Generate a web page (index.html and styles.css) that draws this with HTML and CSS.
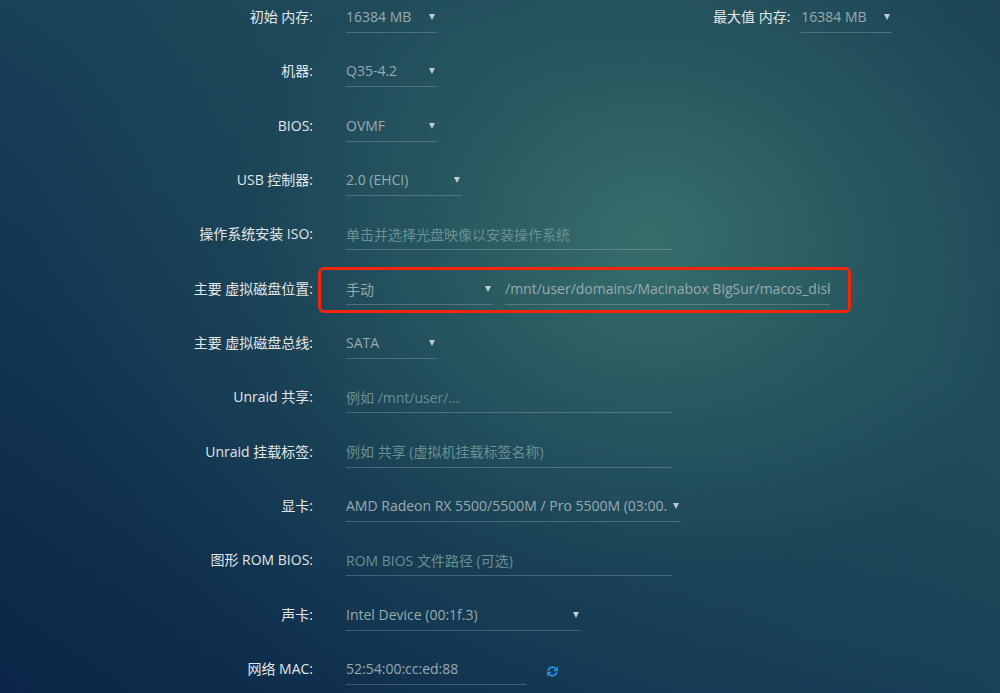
FILE: index.html
```html
<!DOCTYPE html>
<html lang="zh-CN">
<head>
<meta charset="utf-8">
<title>虚拟机设置</title>
<link rel="stylesheet" href="styles.css">
</head>
<body>
<form class="vm-form">
  <div class="row">
    <label class="label">初始 内存:</label>
    <div class="fields">
      <div class="select w-91"><span class="val">16384 MB</span></div>
      <div class="pair">
        <label class="label">最大值 内存:</label>
        <div class="select w-91"><span class="val">16384 MB</span></div>
      </div>
    </div>
  </div>
  <div class="row">
    <label class="label">机器:</label>
    <div class="fields"><div class="select w-91"><span class="val">Q35-4.2</span></div></div>
  </div>
  <div class="row">
    <label class="label">BIOS:</label>
    <div class="fields"><div class="select w-91"><span class="val">OVMF</span></div></div>
  </div>
  <div class="row">
    <label class="label">USB 控制器:</label>
    <div class="fields"><div class="select w-116"><span class="val">2.0 (EHCI)</span></div></div>
  </div>
  <div class="row">
    <label class="label">操作系统安装 ISO:</label>
    <div class="fields"><input class="text w-326" type="text" placeholder="单击并选择光盘映像以安装操作系统"></div>
  </div>
  <div class="row">
    <label class="label">主要 虚拟磁盘位置:</label>
    <div class="fields highlight">
      <div class="select w-147"><span class="val">手动</span></div>
      <input class="text w-325" type="text" value="/mnt/user/domains/Macinabox BigSur/macos_disk.img">
    </div>
  </div>
  <div class="row">
    <label class="label">主要 虚拟磁盘总线:</label>
    <div class="fields"><div class="select w-91"><span class="val">SATA</span></div></div>
  </div>
  <div class="row">
    <label class="label">Unraid 共享:</label>
    <div class="fields"><input class="text w-326" type="text" placeholder="例如 /mnt/user/..."></div>
  </div>
  <div class="row">
    <label class="label">Unraid 挂载标签:</label>
    <div class="fields"><input class="text w-326" type="text" placeholder="例如 共享 (虚拟机挂载标签名称)"></div>
  </div>
  <div class="row">
    <label class="label">显卡:</label>
    <div class="fields"><div class="select w-335 tight"><span class="val">AMD Radeon RX 5500/5500M / Pro 5500M (03:00.0)</span></div></div>
  </div>
  <div class="row">
    <label class="label">图形 ROM BIOS:</label>
    <div class="fields"><input class="text w-326" type="text" placeholder="ROM BIOS 文件路径 (可选)"></div>
  </div>
  <div class="row">
    <label class="label">声卡:</label>
    <div class="fields"><div class="select w-235"><span class="val">Intel Device (00:1f.3)</span></div></div>
  </div>
  <div class="row">
    <label class="label">网络 MAC:</label>
    <div class="fields">
      <input class="text w-180" type="text" value="52:54:00:cc:ed:88">
      <svg class="refresh" viewBox="0 0 16 16" width="13" height="13" aria-hidden="true">
        <path d="M2.6 7.2 A5.6 5.6 0 0 1 12.2 4.6" fill="none" stroke="currentColor" stroke-width="2.4"/>
        <polygon points="14.8,1.6 14.8,7.6 8.8,7.6" fill="currentColor"/>
        <path d="M13.4 8.8 A5.6 5.6 0 0 1 3.8 11.4" fill="none" stroke="currentColor" stroke-width="2.4"/>
        <polygon points="1.2,14.4 1.2,8.4 7.2,8.4" fill="currentColor"/>
      </svg>
    </div>
  </div>
</form>
</body>
</html>
```

FILE: styles.css
```css
html, body {
  margin: 0;
  padding: 0;
}

body {
  width: 1000px;
  height: 693px;
  overflow: hidden;
  font-family: "Open Sans", "Noto Sans CJK SC", sans-serif;
  font-size: 14px;
  color: #dfe4e5;
  background:
    radial-gradient(ellipse 620px 520px at 650px 240px, rgba(56, 112, 108, 0.95) 0%, rgba(44, 94, 98, 0.7) 35%, rgba(33, 76, 90, 0.35) 65%, rgba(33, 76, 90, 0) 100%),
    linear-gradient(to top right, #0b2648 0%, #173e56 45%, #1f4b5a 70%, #1b4255 100%);
}

.vm-form {
  display: grid;
  grid-auto-rows: 54.33px;
  margin: 0;
}

.row {
  display: grid;
  grid-template-columns: 313px 1fr;
  column-gap: 33px;
  align-items: start;
}

.label {
  text-align: right;
  line-height: 20px;
  padding-top: 7px;
  color: #e2e6e7;
  white-space: nowrap;
}

.fields {
  display: flex;
  align-items: flex-start;
  gap: 12px;
}

.pair {
  display: flex;
  align-items: flex-start;
  gap: 11px;
  margin-left: 264px;
}

.select,
.text {
  box-sizing: border-box;
  height: 33px;
  padding: 7px 0 5px;
  line-height: 20px;
  border: 0;
  border-bottom: 1px solid rgba(190, 205, 210, 0.28);
  color: #9aa9ad;
  font: inherit;
  background: transparent;
}

.select {
  position: relative;
  padding-right: 8px;
  overflow: hidden;
  white-space: nowrap;
}

.select.tight {
  padding-right: 14px;
}

.select .val {
  display: block;
  overflow: hidden;
}

.select::after {
  content: "";
  position: absolute;
  right: 2px;
  top: 14px;
  border-left: 3px solid transparent;
  border-right: 3px solid transparent;
  border-top: 6px solid #c3cccf;
}

.text {
  outline: none;
  margin: 0;
}

.text::placeholder {
  color: #6a9092;
  opacity: 1;
}

.w-91 { width: 91px; }
.w-116 { width: 116px; }
.w-147 { width: 147px; }
.w-180 { width: 180px; }
.w-235 { width: 235px; }
.w-325 { width: 325px; }
.w-326 { width: 326px; }
.w-335 { width: 335px; }

.highlight {
  position: relative;
}

.highlight::after {
  content: "";
  position: absolute;
  top: -5px;
  left: -28px;
  width: 533px;
  height: 46px;
  box-sizing: border-box;
  border: 3px solid #f3260b;
  border-radius: 6px;
  pointer-events: none;
}

.refresh {
  color: #1f8fe0;
  margin-top: 13px;
  margin-left: 8px;
}
```
